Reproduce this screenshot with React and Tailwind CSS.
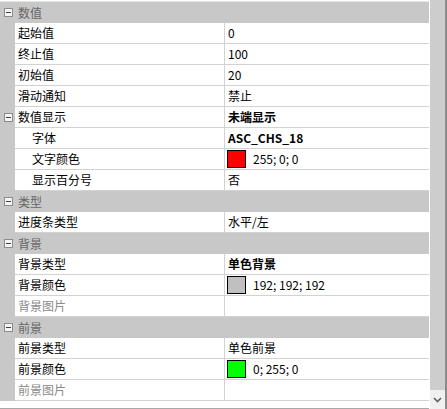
import React from "react";

const rows = [
  { type: "cat", label: "数值" },
  { label: "起始值", value: "0" },
  { label: "终止值", value: "100" },
  { label: "初始值", value: "20" },
  { label: "滑动通知", value: "禁止" },
  { label: "数值显示", value: "未端显示", bold: true, expand: true },
  { label: "字体", value: "ASC_CHS_18", bold: true, indent: true },
  { label: "文字颜色", value: "255; 0; 0", color: "#ff0000", indent: true },
  { label: "显示百分号", value: "否", indent: true },
  { type: "cat", label: "类型" },
  { label: "进度条类型", value: "水平/左" },
  { type: "cat", label: "背景" },
  { label: "背景类型", value: "单色背景", bold: true },
  { label: "背景颜色", value: "192; 192; 192", color: "#c0c0c0" },
  { label: "背景图片", value: "", disabled: true },
  { type: "cat", label: "前景" },
  { label: "前景类型", value: "单色前景" },
  { label: "前景颜色", value: "0; 255; 0", color: "#00ff00" },
  { label: "前景图片", value: "", disabled: true },
];

function Minus() {
  return (
    <div className="w-[9px] h-[9px] border border-[#8c8c8c] bg-[#f4f4f4] flex items-center justify-center">
      <div className="w-[5px] h-px bg-[#404040]" />
    </div>
  );
}

function Row({ row }) {
  if (row.type === "cat") {
    return (
      <div className="h-[21px] flex items-center bg-[#c8c8c8]">
        <div className="w-[15px] flex justify-center pl-[1px]">
          <Minus />
        </div>
        <span className="pl-[3px] text-[#666666]">{row.label}</span>
      </div>
    );
  }
  return (
    <div className="h-[21px] flex">
      <div className="w-[15px] bg-[#c8c8c8] flex items-center justify-center pl-[1px]">
        {row.expand && <Minus />}
      </div>
      <div className="w-[209px] border-b border-[#d2d2d2] flex items-center bg-white">
        <span className={`${row.indent ? "pl-[17px]" : "pl-[3px]"} ${row.disabled ? "text-[#8a8a8a]" : "text-black"}`}>
          {row.label}
        </span>
      </div>
      <div className="w-px bg-[#d2d2d2]" />
      <div className="w-[204px] border-b border-[#d2d2d2] flex items-center bg-white pl-[3px]">
        {row.color && (
          <div className="w-[19px] h-[18px] border border-black mr-[7px] ml-[-1px]" style={{ background: row.color }} />
        )}
        <span className={row.bold ? "font-bold text-black" : "text-black"}>{row.value}</span>
      </div>
    </div>
  );
}

export default function App() {
  return (
    <div
      className="w-[447px] h-[409px] bg-white flex overflow-hidden text-[12px] leading-none"
      style={{ fontFamily: '"Segoe UI", "Noto Sans CJK SC", "Noto Sans", sans-serif' }}
    >
      <div className="w-[429px] flex flex-col">
        <div className="h-[2px] bg-white border-b border-[#e4e4e4]" />
        {rows.map((r, i) => (
          <Row key={i} row={r} />
        ))}
        <div className="flex-1 bg-white border-b border-[#a8a8a8]" />
      </div>
      <div className="w-px bg-white" />
      <div className="w-[15px] flex flex-col bg-[#f0f0f0]">
        <div className="h-[390px] bg-[#cdcdcd]" />
        <div className="flex-1 flex items-center justify-center">
          <svg width="9" height="6" viewBox="0 0 9 6">
            <path d="M1 1 L4.5 4.5 L8 1" fill="none" stroke="#606060" strokeWidth="1.6" />
          </svg>
        </div>
      </div>
      <div className="w-[2px] bg-[#8a8a8a]" />
    </div>
  );
}
